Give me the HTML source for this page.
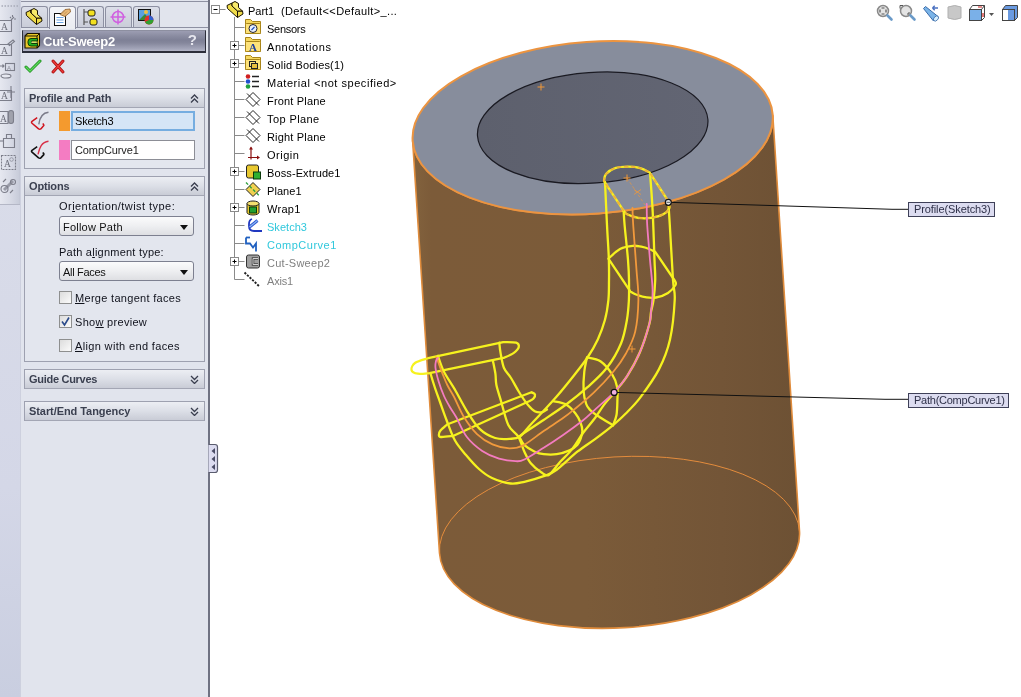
<!DOCTYPE html>
<html><head><meta charset="utf-8">
<style>
*{margin:0;padding:0;box-sizing:border-box}
html,body{width:1021px;height:697px;overflow:hidden;background:#fff;-webkit-font-smoothing:antialiased;font-family:"Liberation Sans",sans-serif;font-size:11px;color:#000}
.a{position:absolute;will-change:transform}
#strip{left:0;top:0;width:21px;height:697px;background:linear-gradient(to bottom,#dcdfea 0%,#d4d7e7 70%,#c9cee0 100%)}
#panel{left:21px;top:0;width:188px;height:697px;background:#e1e4ed}
#pborder{left:208px;top:0;width:2px;height:697px;background:#6f7282}
.tab{top:6px;width:27px;height:22px;border:1px solid #8d90a2;border-bottom:none;border-radius:3px 3px 0 0;background:linear-gradient(#dcdfe9,#c9ccd8)}
.tab.on{background:linear-gradient(#f4f5f8,#e9ebf1);height:23px}
#tabline{left:21px;top:27px;width:187px;height:1px;background:#8d90a2}
#title{left:22px;top:30px;width:184px;height:23px;border:1px solid #2c2e3a;border-top-color:#8d8fa0;border-width:1px 1px 2px 1px;background:linear-gradient(#9c9db2 0%,#8a8ca1 25%,#7e8096 45%,#85879c 60%,#a2a4b8 88%,#b2b4c6 100%)}
#title span{position:absolute;left:20px;top:3px;font-weight:bold;font-size:13px;color:#fff;letter-spacing:-0.25px}
#title b{position:absolute;right:8px;top:0px;font-size:15px;color:#e6e6ee;font-weight:bold}
.grp{left:24px;width:181px;border:1px solid #9ea1b0;background:#e3e6ee}
.gh{position:absolute;left:0;top:0;right:0;height:19px;background:linear-gradient(#eceef3 0%,#dcdfe7 50%,#c9ccd6 100%);border-bottom:1px solid #a3a6b4}
.gh span{position:absolute;left:4px;top:3px;font-weight:bold;color:#3b4050;font-size:11px}
.chev{position:absolute;right:5px;top:5px;width:9px;height:9px}
.lbl{color:#10121c;font-size:11px;white-space:nowrap}
.dd{left:59px;width:135px;height:20px;border:1px solid #7d8090;border-radius:3px;background:linear-gradient(#fbfbfc 0%,#eeeff1 50%,#dedfe3 100%)}
.dd span{position:absolute;left:3px;top:4px;color:#111}
.dd i{position:absolute;right:5px;top:8px;width:0;height:0;border-left:4px solid transparent;border-right:4px solid transparent;border-top:5px solid #111}
.cb{left:59px;width:13px;height:13px;border:1px solid #8e8f8f;background:linear-gradient(135deg,#dcdcdc,#fbfbfb)}
.tree{left:266px;white-space:nowrap;font-size:11.5px}
.tl{background:#808080}
</style></head><body>
<div class="a" id="strip"></div><div class="a" style="left:0;top:0;width:20px;height:204px;background:linear-gradient(to right,#e6e8f0,#d8dbe6 50%,#c6cad8)"></div><div class="a" style="left:20px;top:0;width:1px;height:697px;background:#cdd0de"></div><div class="a" style="left:21px;top:0;width:2px;height:697px;background:#dfe2ee"></div>
<svg class="a" style="left:0;top:0" width="22" height="210" viewBox="0 0 22 210">
 <path d="M1.5,6h1.5 M4.5,6h1.5 M7.5,6h1.5 M10.5,6h1.5 M13.5,6h1.5 M16.5,6h1.5" stroke="#a8aab8" stroke-width="1.5"/>
 <g fill="none" stroke="#7c7e8a" stroke-width="1.1">
  <path d="M-1,20.5h12.5v11h-12.5"/><path d="M11,20l3,-3 M10,17l1,1 M12.5,15v2 M14,19h2"/>
  <path d="M-1,44.5h12.5v11h-12.5"/><path d="M8,44l5,-4 l1.5,1.5 l-5,4z"/>
  <rect x="5.5" y="63.5" width="9" height="7"/><path d="M0,66h4 M2.5,64.5l1.5,1.5l-1.5,1.5"/><ellipse cx="6" cy="76" rx="5" ry="2" fill="#e6e8f0"/>
  <path d="M-1,90.5h12.5v10h-12.5"/><path d="M11,86v12 M7,92h8"/>
  <path d="M-1,111.5h9v12h-9"/><rect x="8.5" y="110.5" width="5" height="13" rx="2.5" fill="#a0a2ac"/>
  <path d="M3.5,138.5h11v9h-11z M6.5,138.5v-4h5v4"/><path d="M0,141h3"/>
  <rect x="1.5" y="155.5" width="14" height="14" stroke-dasharray="2 1"/>
  <path d="M4,190l9,-9" stroke-width="3" stroke="#9a9ca8"/><circle cx="4.5" cy="189" r="3.5"/><circle cx="13" cy="182" r="2.5"/><path d="M10,193l3,-3 M3,182l3,-3"/>
 </g>
 <g font-family="Liberation Serif" font-size="9.5" fill="#6c6e7a">
  <text x="1" y="30">A</text><text x="1" y="54">A</text><text x="1" y="99">A</text><text x="0" y="122">A</text><text x="4" y="167">A</text>
 </g>
 <text x="7" y="69.5" font-family="Liberation Sans" font-size="6" fill="#8c8e9a">A</text>
 <circle cx="11.5" cy="159.5" r="1.8" fill="none" stroke="#8c8e9a" stroke-width="0.8"/>
 <line x1="0" y1="204.5" x2="20" y2="204.5" stroke="#b4b7c6"/>
 <line x1="19.5" y1="0" x2="19.5" y2="204" stroke="#c4c8d6"/>
</svg>
<div class="a" id="panel"></div>
<div class="a" style="left:21px;top:1px;width:187px;height:1px;background:#8e91a2"></div>
<div class="a tab" style="left:21px"></div>
<div class="a tab on" style="left:49px"></div>
<div class="a tab" style="left:77px"></div>
<div class="a tab" style="left:105px"></div>
<div class="a tab" style="left:133px"></div>
<div class="a" id="tabline"></div>
<div class="a" style="left:50px;top:27px;width:25px;height:1px;background:#eceef2"></div>
<!-- tab icons -->
<svg class="a" style="left:21px;top:0" width="140" height="30" viewBox="21 0 140 30">
 <g stroke="#1a1200" stroke-width="1" stroke-linejoin="round">
  <path d="M26,12.5 L31,10 L31,13 L36.5,18 L41.5,18 L42,21 L36.5,24.5 L26.5,15.5 Z" fill="#f0dc48"/>
  <path d="M31,10 L34,8.5 L37.5,10.5 L37.5,14.5 L41.5,18 L36.5,18 L31,13 Z" fill="#f8ea6a"/>
  <path d="M36.5,18 L36.5,24.5 M31,13 L31,10" fill="none"/>
 </g>
 <rect x="54.5" y="13.5" width="11" height="12" fill="#fff" stroke="#111"/>
 <path d="M56.5,17.5h7 M56.5,20h7 M56.5,22.5h7" stroke="#5a9ae0" stroke-width="0.9"/>
 <path d="M60,14.5 L65,9.5 L70,9 L70.5,12 L65,16.5 Z" fill="#e8b878" stroke="#8a5a28" stroke-width="0.8"/><path d="M62,13.5 l3,-3 M64,14.5 l3,-3" stroke="#a87840" stroke-width="0.6"/>
 <path d="M84,9v16 M84,12h4 M84,22h4" stroke="#555" stroke-width="1.2"/>
 <rect x="88" y="10" width="7" height="6" rx="2" fill="#f2e020" stroke="#222"/>
 <rect x="90" y="19" width="7" height="6" rx="2" fill="#f2e020" stroke="#222"/>
 <circle cx="118" cy="17" r="5.5" fill="none" stroke="#d060e0" stroke-width="1.5"/>
 <path d="M118,9.5v15 M110.5,17h15" stroke="#d060e0" stroke-width="1.5"/>
 <rect x="138.5" y="9.5" width="12" height="11" fill="#5aa0e0" stroke="#111"/>
 <path d="M139,20 L145,14 L150,20Z" fill="#3a8a3a"/>
 <circle cx="149" cy="20" r="4.5" fill="#e03030"/><path d="M149,20 L149,15.5 A4.5,4.5 0 0 1 153.5,20Z" fill="#3060d0"/><path d="M149,20 L153.5,20 A4.5,4.5 0 0 1 145,22Z" fill="#30a030"/>
 <circle cx="146" cy="12" r="2" fill="#f0c040"/>
</svg>
<div class="a" id="title"><span>Cut-Sweep2</span><b>?</b></div>
<svg class="a" style="left:22px;top:32px" width="20" height="19" viewBox="22 32 20 19">
 <path d="M27.5,33.5 H39.5 V45.5 L37,48 H25 V36 Z" fill="#e8c828" stroke="#1a1400" stroke-width="1.1" stroke-linejoin="round"/>
 <path d="M25,36 L27.5,33.5 M37,36 L39.5,33.5 M37,36 V48" fill="none" stroke="#1a1400" stroke-width="1"/>
 <path d="M25,36 H37" stroke="#1a1400" stroke-width="1"/>
 <path d="M37.5,38.5 H31 Q28,38.5 28,41.5 V43 Q28,46 31,46 H37.5 V43.5 H31.5 V41 H37.5 Z" fill="#22b022" stroke="#052a05" stroke-width="0.9"/>
 <path d="M31,42.2 H37" stroke="#c8f0a0" stroke-width="0.9"/>
</svg>
<!-- ok / cancel -->
<svg class="a" style="left:24px;top:58px" width="45" height="17" viewBox="24 58 45 17">
 <path d="M26,67 L30,71 L40,61" fill="none" stroke="#1f8f1f" stroke-width="3.0" stroke-linecap="round"/>
 <path d="M26,67 L30,71 L40,61" fill="none" stroke="#5ad85a" stroke-width="1.3" stroke-linecap="round"/>
 <path d="M53,61 L63,72 M63,61 L53,72" stroke="#a80e0e" stroke-width="3.0" stroke-linecap="round"/>
 <path d="M53,61 L63,72 M63,61 L53,72" stroke="#ee3a3a" stroke-width="1.3" stroke-linecap="round"/>
</svg>
<!-- Profile and Path -->
<div class="a grp" style="top:88px;height:81px">
 <div class="gh"><span style="letter-spacing:-0.09px">Profile and Path</span>
 <svg class="chev" viewBox="0 0 9 9"><path d="M1,4.5 L4.5,1 L8,4.5 M1,8.5 L4.5,5 L8,8.5" fill="none" stroke="#3a3e4e" stroke-width="1.3"/></svg></div>
</div>
<svg class="a" style="left:29px;top:108px" width="22" height="54" viewBox="29 108 22 54">
 <path d="M37.2,117.7 L32,121.3 Q31,122.3 32,123.2 L38.6,128.9 Q39.8,129.6 40.8,128.9 L43.8,125.6 Q44.2,124.9 43.4,124.2 L42.6,123.6" fill="none" stroke="#d0141e" stroke-width="1.5" stroke-linejoin="round"/>
 <path d="M38.8,124.3 C39.5,119 41.5,113 48.5,112.3" fill="none" stroke="#7a7a88" stroke-width="1.4"/>
 <path d="M37.2,146.7 L32,150.3 Q31,151.3 32,152.2 L38.6,157.9 Q39.8,158.6 40.8,157.9 L43.8,154.6 Q44.2,153.9 43.4,153.2 L42.6,152.6" fill="none" stroke="#111" stroke-width="1.6" stroke-linejoin="round"/>
 <path d="M38,154.3 C39.5,148 41.5,142 48.5,141.3" fill="none" stroke="#d83048" stroke-width="1.4"/>
</svg>
<div class="a" style="left:59px;top:111px;width:11px;height:20px;background:#f49a2e"></div>
<div class="a" style="left:71px;top:111px;width:124px;height:20px;border:2px solid #76ade0;background:#d5e5f6"><span class="a" style="left:2px;top:2px;font-size:11px;color:#000;letter-spacing:-0.19px">Sketch3</span></div>
<div class="a" style="left:59px;top:140px;width:11px;height:20px;background:#f47cc2"></div>
<div class="a" style="left:71px;top:140px;width:124px;height:20px;border:1px solid #8c8e96;background:#fff"><span class="a" style="left:3px;top:3px;font-size:11px;color:#222;letter-spacing:-0.11px">CompCurve1</span></div>
<!-- Options -->
<div class="a grp" style="top:176px;height:186px">
 <div class="gh"><span style="letter-spacing:-0.16px">Options</span>
 <svg class="chev" viewBox="0 0 9 9"><path d="M1,4.5 L4.5,1 L8,4.5 M1,8.5 L4.5,5 L8,8.5" fill="none" stroke="#3a3e4e" stroke-width="1.3"/></svg></div>
</div>
<div class="a lbl" style="left:59px;top:200px;letter-spacing:0.45px">Or<u>i</u>entation/twist type:</div>
<div class="a dd" style="top:216px"><span style="letter-spacing:0.21px">Follow Path</span><i></i></div>
<div class="a lbl" style="left:59px;top:246px;letter-spacing:0.23px">Path a<u>l</u>ignment type:</div>
<div class="a dd" style="top:261px"><span style="letter-spacing:-0.3px">All Faces</span><i></i></div>
<div class="a cb" style="top:291px"></div>
<div class="a lbl" style="left:75px;top:292px;letter-spacing:0.3px"><u>M</u>erge tangent faces</div>
<div class="a cb" style="top:315px"><svg width="11" height="11" style="position:absolute;left:0;top:0"><path d="M2,5.5 L4.5,9 L9,1.5" fill="none" stroke="#2a4a8a" stroke-width="1.6"/></svg></div>
<div class="a lbl" style="left:75px;top:316px;letter-spacing:0.3px">Sho<u>w</u> preview</div>
<div class="a cb" style="top:339px"></div>
<div class="a lbl" style="left:75px;top:340px;letter-spacing:0.35px"><u>A</u>lign with end faces</div>
<div class="a grp" style="top:369px;height:20px">
 <div class="gh"><span style="letter-spacing:-0.29px">Guide Curves</span>
 <svg class="chev" viewBox="0 0 9 9"><path d="M1,1 L4.5,4.5 L8,1 M1,5 L4.5,8.5 L8,5" fill="none" stroke="#3a3e4e" stroke-width="1.3"/></svg></div>
</div>
<div class="a grp" style="top:401px;height:20px">
 <div class="gh"><span style="letter-spacing:-0.07px">Start/End Tangency</span>
 <svg class="chev" viewBox="0 0 9 9"><path d="M1,1 L4.5,4.5 L8,1 M1,5 L4.5,8.5 L8,5" fill="none" stroke="#3a3e4e" stroke-width="1.3"/></svg></div>
</div>
<div class="a" id="pborder"></div>
<svg class="a" style="left:208px;top:443px" width="11" height="31" viewBox="208 443 11 31">
 <path d="M208.5,444.5 H215 Q217.5,444.5 217.5,447 V470 Q217.5,472.5 215,472.5 H208.5" fill="#dcdcf0" stroke="#5a5c6e" stroke-width="1.2"/>
 <path d="M215,448 L211.5,451 L215,454Z M215,456 L211.5,459 L215,462Z M215,464 L211.5,467 L215,470Z" fill="#4a4c66"/>
</svg>
<!-- graphics -->
<svg class="a" style="left:0;top:0" width="1021" height="697" viewBox="0 0 1021 697">
<defs><linearGradient id="side" x1="412" y1="0" x2="799" y2="0" gradientUnits="userSpaceOnUse"><stop offset="0" stop-color="#83633e"/><stop offset="0.05" stop-color="#7c5b39"/><stop offset="0.45" stop-color="#7b5b39"/><stop offset="0.8" stop-color="#735537"/><stop offset="1" stop-color="#6d5134"/></linearGradient><linearGradient id="hole" x1="0" y1="0" x2="1" y2="0"><stop offset="0" stop-color="#5d606d"/><stop offset="1" stop-color="#626573"/></linearGradient></defs>
<path d="M412.6,140.4 L439.5,553.2 A180.3,85.5 -3.40 0 0 799.5,531.4 L772.8,115.2 A180.5,86.0 -4.10 0 1 412.6,140.4 Z" fill="url(#side)" stroke="#e08c3c" stroke-width="1.6"/>
<path d="M439.5,553.2 A180.3,85.5 -3.40 0 1 799.5,531.4" fill="none" stroke="#e48c3c" stroke-width="1"/>
<ellipse cx="592.7" cy="127.8" rx="180.5" ry="86.0" transform="rotate(-4.10 592.7 127.8)" fill="#878d9c" stroke="#ec9440" stroke-width="2"/>
<ellipse cx="592.7" cy="127.8" rx="115.5" ry="55.3" transform="rotate(-4.10 592.7 127.8)" fill="url(#hole)" stroke="#1a1a22" stroke-width="1.2"/>
<path d="M605.0,182.0 C605.3,189.2 606.4,212.3 607.0,225.0 C607.6,237.7 608.5,248.8 608.8,258.0 C609.1,267.2 609.1,273.0 609.0,280.0 C608.9,287.0 609.1,293.3 608.4,300.0 C607.7,306.7 606.7,313.4 604.9,320.0 C603.1,326.6 600.7,333.1 597.8,339.4 C594.9,345.6 591.4,351.6 587.5,357.5 C583.6,363.4 579.5,368.4 574.3,375.0 C569.1,381.6 561.4,391.1 556.2,397.1 C551.0,403.1 547.6,406.5 543.2,411.2 C538.9,415.9 534.0,421.0 530.1,425.2 C526.2,429.4 523.4,434.2 520.0,436.5 C516.6,438.8 514.1,438.6 510.0,438.8 C505.9,439.1 500.2,439.6 495.1,438.0 C490.0,436.4 484.3,433.4 479.6,428.9 C474.9,424.4 470.7,417.2 466.7,410.8 C462.7,404.4 459.2,397.1 455.4,390.5 C451.6,383.9 446.6,377.0 443.7,371.2 C440.8,365.4 438.9,358.3 437.9,355.7" fill="none" stroke="#f6f21e" stroke-width="2.30" stroke-linecap="round" stroke-linejoin="round" />
<path d="M499.3,342.7 C499.5,344.4 499.8,348.9 500.6,353.1 C501.4,357.3 502.3,363.9 504.0,368.0 C505.7,372.1 508.5,374.0 511.0,378.0 C513.5,382.0 516.2,387.5 519.0,392.0 C521.8,396.5 525.3,401.8 528.0,405.0 C530.7,408.2 532.8,410.3 535.2,411.5 C537.6,412.7 540.2,412.5 542.2,412.2 C544.2,411.9 546.2,409.9 547.0,409.5" fill="none" stroke="#f6f21e" stroke-width="2.30" stroke-linecap="round" stroke-linejoin="round" />
<path d="M623.6,210.7 C623.8,213.1 623.9,216.8 624.6,225.0 C625.3,233.2 627.3,250.8 628.0,260.0 C628.7,269.2 628.9,273.3 629.0,280.0 C629.1,286.7 629.2,293.3 628.9,300.0 C628.5,306.7 628.2,312.8 626.9,320.0 C625.6,327.2 624.4,335.2 621.1,343.2 C617.8,351.2 612.5,360.5 606.9,367.8 C601.3,375.1 594.2,381.2 587.5,387.2 C580.8,393.2 574.2,398.5 566.8,404.0 C559.4,409.5 550.2,415.5 543.2,420.2 C536.2,424.9 529.1,429.6 525.1,432.3 C521.1,435.0 520.0,435.8 519.0,436.5" fill="none" stroke="#f6f21e" stroke-width="2.30" stroke-linecap="round" stroke-linejoin="round" />
<path d="M650.2,175.0 C650.6,181.2 652.0,197.8 652.7,212.0 C653.4,226.2 654.1,248.7 654.5,260.0 C654.9,271.3 655.4,273.3 655.2,280.0 C655.0,286.7 654.2,294.7 653.5,300.0 C652.8,305.3 651.7,308.1 651.0,312.0 C650.3,315.9 651.2,317.0 649.4,323.7 C647.6,330.4 643.7,343.3 640.0,352.0 C636.3,360.7 631.6,369.1 627.3,375.8 C623.0,382.6 618.2,387.7 614.4,392.5 C610.6,397.3 607.5,400.1 604.3,404.4 C601.1,408.6 598.5,413.2 595.0,418.0 C591.5,422.8 586.8,427.8 583.0,433.0 C579.2,438.2 576.0,444.3 572.2,449.1 C568.4,453.9 563.9,457.7 560.0,462.0 C556.1,466.3 552.0,473.2 548.9,474.9 C545.8,476.6 544.2,474.2 541.2,472.3 C538.2,470.4 533.6,466.7 530.8,463.3 C528.0,459.9 526.5,456.1 524.4,451.7 C522.3,447.3 521.0,441.1 518.3,436.7 C515.6,432.2 511.2,431.2 508.3,425.0 C505.4,418.8 502.6,406.3 500.6,399.6 C498.6,392.9 497.3,389.3 496.4,385.0 C495.5,380.7 496.0,377.8 495.4,373.7 C494.8,369.6 493.2,362.4 492.8,360.2" fill="none" stroke="#f6f21e" stroke-width="2.30" stroke-linecap="round" stroke-linejoin="round" />
<path d="M668.3,201.2 C668.5,205.2 669.0,211.9 669.8,225.0 C670.6,238.1 672.2,267.5 673.0,280.0 C673.8,292.5 675.2,290.1 674.7,300.0 C674.2,309.9 672.6,327.9 670.0,339.5 C667.4,351.1 663.9,359.7 658.9,369.4 C653.9,379.1 645.6,390.4 640.0,397.9 C634.4,405.4 629.6,409.5 625.0,414.2 C620.4,418.9 617.1,421.7 612.2,425.8 C607.3,429.9 601.2,434.5 595.4,438.8 C589.6,443.1 583.8,446.6 577.3,451.7 C570.8,456.8 562.3,465.6 556.7,469.7 C551.1,473.8 549.1,474.2 543.7,476.2 C538.3,478.2 529.9,480.6 524.4,481.8 C518.9,483.0 516.0,484.1 510.6,483.5 C505.2,482.9 497.3,480.4 492.0,478.0 C486.7,475.6 483.3,472.8 479.0,469.0 C474.7,465.2 470.0,459.8 466.0,455.0 C462.0,450.2 458.2,446.3 455.0,440.5 C451.8,434.7 449.0,426.4 446.5,420.0 C444.0,413.6 441.9,407.3 440.0,402.0 C438.1,396.7 436.6,392.8 435.0,388.0 C433.4,383.2 431.2,375.9 430.5,373.5" fill="none" stroke="#f6f21e" stroke-width="2.30" stroke-linecap="round" stroke-linejoin="round" />
<path d="M608.4,258.7 C610.3,257.1 615.9,251.2 620.0,249.0 C624.1,246.8 628.7,246.1 632.9,245.8 C637.1,245.6 641.3,246.5 645.0,247.5 C648.7,248.5 653.5,251.1 655.2,251.8 L675.0,281.0 C675.1,281.7 676.7,283.0 675.5,285.0 C674.3,287.0 671.2,290.9 668.0,293.0 C664.8,295.1 659.6,296.8 656.0,297.5 C652.4,298.2 649.9,297.9 646.6,297.4 C643.3,296.9 638.7,295.5 636.0,294.5 C633.3,293.5 631.2,291.9 630.3,291.4 L608.4,258.7Z" fill="none" stroke="#f6f21e" stroke-width="2.30" stroke-linecap="round" stroke-linejoin="round" />
<path d="M587.0,357.5 C586.5,359.9 584.9,366.1 584.3,371.7 C583.7,377.3 583.3,385.6 583.6,391.0 C583.9,396.4 585.1,400.8 586.2,404.0 C587.3,407.2 588.1,407.9 590.1,410.0 C592.1,412.1 594.7,413.8 598.5,416.3 C602.3,418.9 610.6,423.8 613.0,425.3" fill="none" stroke="#f6f21e" stroke-width="2.30" stroke-linecap="round" stroke-linejoin="round" />
<path d="M587.0,357.5 C589.2,358.1 596.2,358.5 600.4,361.3 C604.6,364.1 609.2,369.9 612.0,374.2 C614.8,378.5 616.3,382.9 617.2,387.2 C618.1,391.5 617.5,395.4 617.4,400.0 C617.3,404.6 617.2,410.8 616.5,415.0 C615.8,419.2 613.6,423.6 613.0,425.3" fill="none" stroke="#f6f21e" stroke-width="2.30" stroke-linecap="round" stroke-linejoin="round" />
<path d="M428.2,358.2 L503.2,342.1 C505.4,342.2 513.5,341.8 516.1,342.7 C518.7,343.6 519.1,345.6 518.7,347.3 C518.3,349.0 515.9,351.4 513.5,353.1 C511.1,354.8 506.0,356.9 504.5,357.6 L429.5,373.1 C427.6,373.2 420.9,374.2 417.9,373.7 C414.9,373.2 411.9,371.7 411.5,369.9 C411.1,368.1 412.5,364.8 415.3,362.8 C418.1,360.9 426.1,359.0 428.2,358.2Z" fill="none" stroke="#f6f21e" stroke-width="2.30" stroke-linecap="round" stroke-linejoin="round" />
<path d="M447.0,424.5 L531.5,392.2 C532.1,392.6 534.7,393.4 535.0,394.5 C535.3,395.6 534.6,397.3 533.5,398.5 C532.4,399.7 529.3,401.0 528.5,401.5 L453.0,436.0 C451.0,436.2 443.4,437.2 441.0,437.0 C438.6,436.8 439.0,435.8 438.9,434.7 C438.8,433.6 439.1,432.2 440.5,430.5 C441.9,428.8 445.9,425.5 447.0,424.5Z" fill="none" stroke="#f6f21e" stroke-width="2.30" stroke-linecap="round" stroke-linejoin="round" />
<path d="M553.2,401.1 C555.2,401.6 561.6,402.1 565.3,404.1 C569.0,406.1 572.8,410.2 575.3,413.2 C577.8,416.2 579.2,419.2 580.4,422.2 C581.6,425.2 582.4,428.3 582.4,431.2 C582.4,434.1 581.2,437.0 580.4,439.3 C579.5,441.6 579.1,443.1 577.3,445.0 C575.5,446.9 573.0,448.9 569.6,450.4 C566.2,451.9 561.0,453.6 556.7,454.2 C552.4,454.8 547.4,454.6 543.7,454.2 C540.0,453.8 537.9,453.2 534.7,451.7 C531.5,450.2 526.9,447.5 524.4,445.2 C521.9,442.9 520.7,439.2 520.0,438.0" fill="none" stroke="#f6f21e" stroke-width="2.30" stroke-linecap="round" stroke-linejoin="round" />
<path d="M604.0,181.1 C604.3,179.9 604.1,176.3 606.0,174.1 C607.9,171.9 611.4,169.3 615.1,168.1 C618.8,166.8 623.9,166.6 628.1,166.6 C632.3,166.6 636.6,167.1 640.2,168.1 C643.8,169.1 648.1,171.8 649.7,172.6 L668.3,201.2 C668.5,202.4 670.1,206.0 669.3,208.2 C668.5,210.4 666.3,212.7 663.3,214.3 C660.3,215.9 655.4,217.2 651.2,217.8 C647.0,218.4 642.2,218.4 638.2,217.8 C634.2,217.2 629.5,215.5 627.1,214.3 C624.7,213.1 624.2,211.3 623.6,210.7 L604.0,181.1Z" fill="none" stroke="#f6f21e" stroke-width="2.30" stroke-linecap="round" stroke-linejoin="round" />
<path d="M604.0,181.1 C604.3,179.9 604.1,176.3 606.0,174.1 C607.9,171.9 611.4,169.3 615.1,168.1 C618.8,166.8 623.9,166.6 628.1,166.6 C632.3,166.6 636.6,167.1 640.2,168.1 C643.8,169.1 648.1,171.8 649.7,172.6 L668.3,201.2 C668.5,202.4 670.1,206.0 669.3,208.2 C668.5,210.4 666.3,212.7 663.3,214.3 C660.3,215.9 655.4,217.2 651.2,217.8 C647.0,218.4 642.2,218.4 638.2,217.8 C634.2,217.2 629.5,215.5 627.1,214.3 C624.7,213.1 624.2,211.3 623.6,210.7 L604.0,181.1Z" fill="none" stroke="#eea040" stroke-width="1.80" stroke-linecap="round" stroke-linejoin="round" stroke-dasharray="3 4" stroke-opacity="0.8"/>
<path d="M632.5,208.0 C632.6,210.8 632.5,214.7 633.2,225.0 C633.9,235.3 635.6,257.5 636.5,270.0 C637.4,282.5 638.6,289.7 638.4,300.0 C638.2,310.3 637.3,322.7 635.2,331.6 C633.1,340.6 629.4,347.0 625.8,353.7 C622.1,360.4 618.6,365.3 613.3,371.7 C608.0,378.1 600.5,386.1 594.0,392.3 C587.5,398.5 579.8,404.8 574.6,409.1 C569.5,413.4 568.2,414.5 563.1,418.1 C558.0,421.8 550.3,426.5 543.7,431.0 C537.1,435.5 529.2,442.3 523.5,445.2 C517.8,448.1 514.5,448.4 509.3,448.3 C504.1,448.2 497.9,446.8 492.5,444.4 C487.1,442.0 481.7,438.6 477.0,434.1 C472.3,429.6 467.9,423.5 464.1,417.3 C460.3,411.1 456.9,402.4 454.1,397.0 C451.3,391.6 449.2,388.9 447.3,385.0 C445.4,381.1 444.2,377.9 442.5,373.7 C440.8,369.4 438.4,362.2 437.3,359.5 C436.2,356.8 436.2,357.8 436.0,357.5" fill="none" stroke="#f29a3c" stroke-width="1.80" stroke-linecap="round" stroke-linejoin="round" />
<path d="M646.7,204.0 C646.8,207.5 646.7,215.7 647.2,225.0 C647.8,234.3 649.1,249.2 650.0,260.0 C650.9,270.8 652.4,281.3 652.6,290.0 C652.8,298.7 651.5,306.4 651.0,312.0 C650.5,317.6 651.2,317.0 649.4,323.7 C647.6,330.4 643.7,343.3 640.0,352.0 C636.3,360.7 631.6,369.1 627.3,375.8 C623.0,382.5 619.2,386.8 614.0,392.3 C608.8,397.8 601.0,404.2 595.8,408.9 C590.5,413.6 588.0,416.4 582.5,420.7 C577.0,425.0 569.6,430.4 563.1,434.9 C556.6,439.4 550.2,443.7 543.7,447.8 C537.2,451.9 529.1,457.3 524.4,459.5 C519.7,461.7 519.9,461.3 515.7,461.2 C511.5,461.1 504.6,460.3 499.0,458.6 C493.4,456.9 487.6,454.5 482.2,450.9 C476.8,447.2 471.0,442.3 466.7,436.7 C462.4,431.1 459.0,422.1 456.3,417.3 C453.6,412.5 452.6,411.6 450.5,408.0 C448.4,404.4 446.0,400.5 444.0,396.0 C442.0,391.5 439.9,385.7 438.5,381.0 C437.1,376.3 435.9,371.3 435.5,368.0 C435.1,364.7 435.6,362.7 436.0,361.0 C436.4,359.3 437.7,358.5 438.0,358.0" fill="none" stroke="#f47cc0" stroke-width="1.80" stroke-linecap="round" stroke-linejoin="round" />
<polyline points="668.3,202.3 892,209.3 908.5,209.3" fill="none" stroke="#111" stroke-width="1"/>
<polyline points="614.2,392.4 885,399.3 908.5,399.3" fill="none" stroke="#111" stroke-width="1"/>
<circle cx="668.3" cy="202.3" r="3" fill="#e8e8e8" stroke="#111" stroke-width="1.2"/>
<line x1="666.5" y1="202.3" x2="670" y2="202.3" stroke="#333" stroke-width="0.8"/>
<circle cx="614.2" cy="392.4" r="3" fill="#f0b0e0" stroke="#111" stroke-width="1.2"/>
<path d="M537.5,87.0 h7 M541.0,83.5 v7" stroke="#f09838" stroke-width="1"/>
<path d="M628.5,349.0 h7 M632.0,345.5 v7" stroke="#f09838" stroke-width="1"/>
<path d="M623.5,178.0 h7 M627.0,174.5 v7" stroke="#f09838" stroke-width="1"/>
<path d="M627,178 L645,205" stroke="#f09838" stroke-width="0.9" stroke-dasharray="3 2" stroke-opacity="0.7"/>
<path d="M634,189.5 l7,5 M641,189.5 l-7,5" stroke="#f09838" stroke-width="1" stroke-opacity="0.75"/>
</svg>
<!-- annotation boxes -->
<div class="a" style="left:908px;top:202px;width:87px;height:15px;border:1px solid #3e4058;background:#dcdcf0"><span class="a" style="left:5px;top:0px;font-size:11px;color:#2e3048;letter-spacing:-0.1px">Profile(Sketch3)</span></div>
<div class="a" style="left:908px;top:393px;width:101px;height:15px;border:1px solid #3e4058;background:#dcdcf0"><span class="a" style="left:5px;top:0px;font-size:11px;color:#2e3048;letter-spacing:-0.25px">Path(CompCurve1)</span></div>
<!-- feature tree -->
<svg class="a" style="left:205px;top:0" width="160" height="290" viewBox="205 0 160 290">
<rect x="211.5" y="5.5" width="8" height="8" fill="#fff" stroke="#8a8a8a"/><path d="M213.5,9.5h4" stroke="#000"/>
<path d="M219.5,9.5h6" stroke="#8a8a8a"/>
<path d="M234.5,17v262.5" stroke="#8a8a8a"/>
<g transform="translate(201,-7)" stroke="#1a1200" stroke-width="1" stroke-linejoin="round"><path d="M26,12.5 L31,10 L31,13 L36.5,18 L41.5,18 L42,21 L36.5,24.5 L26.5,15.5 Z" fill="#f0dc48"/><path d="M31,10 L34,8.5 L37.5,10.5 L37.5,14.5 L41.5,18 L36.5,18 L31,13 Z" fill="#f8ea6a"/><path d="M36.5,18 L36.5,24.5" fill="none"/></g>
<path d="M234.5,27.5h10" stroke="#8a8a8a"/>
<path d="M245.5,19.5 h5 l2,2 h8 v12 h-15 z" fill="#f6d860" stroke="#a88418" stroke-width="1"/>
<rect x="245.5" y="23.5" width="15" height="10" rx="1" fill="#fde27a" stroke="#a88418"/>
<circle cx="253.0" cy="28.5" r="4" fill="#e8f0ff" stroke="#223"/><path d="M251.5,30.0 l3,-3" stroke="#2050c0" stroke-width="1.2"/>
<path d="M234.5,45.5h10" stroke="#8a8a8a"/>
<rect x="230.5" y="41.5" width="8" height="8" fill="#fff" stroke="#8a8a8a"/><path d="M232.5,45.5h4 M234.5,43.5v4" stroke="#000"/>
<path d="M245.5,37.5 h5 l2,2 h8 v12 h-15 z" fill="#f6d860" stroke="#a88418" stroke-width="1"/>
<rect x="245.5" y="41.5" width="15" height="10" rx="1" fill="#fde27a" stroke="#a88418"/>
<text x="249.0" y="50.5" font-family="Liberation Serif" font-weight="bold" font-size="11" fill="#2040a0">A</text>
<path d="M234.5,63.5h10" stroke="#8a8a8a"/>
<rect x="230.5" y="59.5" width="8" height="8" fill="#fff" stroke="#8a8a8a"/><path d="M232.5,63.5h4 M234.5,61.5v4" stroke="#000"/>
<path d="M245.5,55.5 h5 l2,2 h8 v12 h-15 z" fill="#f6d860" stroke="#a88418" stroke-width="1"/>
<rect x="245.5" y="59.5" width="15" height="10" rx="1" fill="#fde27a" stroke="#a88418"/>
<rect x="249.5" y="61.5" width="6" height="5" fill="none" stroke="#222"/><rect x="251.5" y="63.5" width="6" height="5" fill="#e8c040" stroke="#222"/>
<path d="M234.5,81.5h10" stroke="#8a8a8a"/>
<circle cx="248.0" cy="76.5" r="2.3" fill="#d02020"/><circle cx="248.0" cy="81.5" r="2.3" fill="#2050d0"/><circle cx="248.0" cy="86.5" r="2.3" fill="#20a040"/>
<path d="M252.0,76.5h7 M252.0,81.5h7 M252.0,86.5h7" stroke="#222" stroke-width="1.6"/>
<path d="M234.5,99.5h10" stroke="#8a8a8a"/>
<path d="M246.0,99.5 l7,-7 l7,7 l-7,7 z" fill="none" stroke="#222" stroke-width="1"/><path d="M247.0,93.5 l12,12" stroke="#222" stroke-width="1"/>
<path d="M234.5,117.5h10" stroke="#8a8a8a"/>
<path d="M246.0,117.5 l7,-7 l7,7 l-7,7 z" fill="none" stroke="#222" stroke-width="1"/><path d="M247.0,111.5 l12,12" stroke="#222" stroke-width="1"/>
<path d="M234.5,135.5h10" stroke="#8a8a8a"/>
<path d="M246.0,135.5 l7,-7 l7,7 l-7,7 z" fill="none" stroke="#222" stroke-width="1"/><path d="M247.0,129.5 l12,12" stroke="#222" stroke-width="1"/>
<path d="M234.5,153.5h10" stroke="#8a8a8a"/>
<path d="M251.0,159.5 v-12 M248.0,157.5 h11" stroke="#8a1010" stroke-width="1.2"/><path d="M251.0,146.5 l-2,3 h4z M260.0,157.5 l-3,-2 v4z" fill="#8a1010"/>
<path d="M234.5,171.5h10" stroke="#8a8a8a"/>
<rect x="230.5" y="167.5" width="8" height="8" fill="#fff" stroke="#8a8a8a"/><path d="M232.5,171.5h4 M234.5,169.5v4" stroke="#000"/>
<rect x="246.5" y="165.0" width="12" height="13" rx="2" fill="#e8c830" stroke="#222"/><rect x="253.5" y="172.0" width="7" height="7" fill="#30b030" stroke="#0a3a0a"/>
<path d="M234.5,189.5h10" stroke="#8a8a8a"/>
<path d="M246.0,189.5 l7,-7 l7,7 l-7,7 z" fill="#f0d050" stroke="#222" stroke-width="1"/><path d="M246.0,182.5 l13,13" stroke="#30a040" stroke-width="1.4" stroke-dasharray="3 2"/>
<path d="M234.5,207.5h10" stroke="#8a8a8a"/>
<rect x="230.5" y="203.5" width="8" height="8" fill="#fff" stroke="#8a8a8a"/><path d="M232.5,207.5h4 M234.5,205.5v4" stroke="#000"/>
<path d="M247.0,203.5 v9 a6,2.5 0 0 0 12,0 v-9" fill="#e8c830" stroke="#222"/><ellipse cx="253.0" cy="203.5" rx="6" ry="2.5" fill="#f4e070" stroke="#222"/><rect x="249.5" y="207.0" width="7" height="6" fill="#20a030" stroke="#0a3a0a"/>
<path d="M234.5,225.5h10" stroke="#8a8a8a"/>
<path d="M252.0,219.0 q-3,1 -3,5 v2 q0,5 5,5 h8" fill="none" stroke="#2038c0" stroke-width="1.8"/><path d="M249.5,227.0 l8,-6.5" stroke="#2a50d0" stroke-width="3"/><path d="M249.5,227.0 l8,-6.5" stroke="#8ab8f0" stroke-width="1.2"/>
<path d="M234.5,243.5h10" stroke="#8a8a8a"/>
<path d="M246.0,237.5 v6 h4 l3,4 l3,-4 v8" fill="none" stroke="#2060c0" stroke-width="1.8"/><path d="M246.0,237.5 h4" stroke="#2060c0" stroke-width="1.8"/>
<path d="M234.5,261.5h10" stroke="#8a8a8a"/>
<rect x="230.5" y="257.5" width="8" height="8" fill="#fff" stroke="#8a8a8a"/><path d="M232.5,261.5h4 M234.5,259.5v4" stroke="#000"/>
<rect x="246.5" y="255.0" width="13" height="13" rx="2" fill="#a0a0a0" stroke="#333"/><path d="M258.0,258.5 h-5 v6 h5" fill="none" stroke="#444" stroke-width="2.5"/><path d="M258.0,258.5 h-5 v6 h5" fill="none" stroke="#d0d0d0" stroke-width="1"/>
<path d="M234.5,279.5h10" stroke="#8a8a8a"/>
<path d="M244.5,272.5 l15,14" stroke="#222" stroke-width="1.9" stroke-dasharray="2.2 1.3"/>
</svg>
<div class="a" style="left:247.5px;top:5.3px;font-size:11px;font-weight:normal;color:#000;letter-spacing:-0.02px;white-space:nowrap;line-height:13px;">Part1</div>
<div class="a" style="left:280.8px;top:5.3px;font-size:11px;font-weight:normal;color:#000;letter-spacing:0.38px;white-space:nowrap;line-height:13px;">(Default&lt;&lt;Default&gt;_...</div>
<div class="a" style="left:266.5px;top:23.1px;font-size:11px;font-weight:normal;color:#000;letter-spacing:-0.28px;white-space:nowrap;line-height:13px;">Sensors</div>
<div class="a" style="left:266.5px;top:41.1px;font-size:11px;font-weight:normal;color:#000;letter-spacing:0.58px;white-space:nowrap;line-height:13px;">Annotations</div>
<div class="a" style="left:266.5px;top:59.1px;font-size:11px;font-weight:normal;color:#000;letter-spacing:0.16px;white-space:nowrap;line-height:13px;">Solid Bodies(1)</div>
<div class="a" style="left:266.5px;top:77.1px;font-size:11px;font-weight:normal;color:#000;letter-spacing:0.54px;white-space:nowrap;line-height:13px;">Material &lt;not specified&gt;</div>
<div class="a" style="left:266.5px;top:95.1px;font-size:11px;font-weight:normal;color:#000;letter-spacing:0.18px;white-space:nowrap;line-height:13px;">Front Plane</div>
<div class="a" style="left:266.5px;top:113.1px;font-size:11px;font-weight:normal;color:#000;letter-spacing:0.40px;white-space:nowrap;line-height:13px;">Top Plane</div>
<div class="a" style="left:266.5px;top:131.1px;font-size:11px;font-weight:normal;color:#000;letter-spacing:0.18px;white-space:nowrap;line-height:13px;">Right Plane</div>
<div class="a" style="left:266.5px;top:149.1px;font-size:11px;font-weight:normal;color:#000;letter-spacing:0.51px;white-space:nowrap;line-height:13px;">Origin</div>
<div class="a" style="left:266.5px;top:167.1px;font-size:11px;font-weight:normal;color:#000;letter-spacing:0.11px;white-space:nowrap;line-height:13px;">Boss-Extrude1</div>
<div class="a" style="left:266.5px;top:185.1px;font-size:11px;font-weight:normal;color:#000;letter-spacing:0.05px;white-space:nowrap;line-height:13px;">Plane1</div>
<div class="a" style="left:266.5px;top:203.1px;font-size:11px;font-weight:normal;color:#000;letter-spacing:0.28px;white-space:nowrap;line-height:13px;">Wrap1</div>
<div class="a" style="left:266.5px;top:221.1px;font-size:11px;font-weight:normal;color:#30c8dc;letter-spacing:0.03px;white-space:nowrap;line-height:13px;">Sketch3</div>
<div class="a" style="left:266.5px;top:239.1px;font-size:11px;font-weight:normal;color:#30c8dc;letter-spacing:0.50px;white-space:nowrap;line-height:13px;">CompCurve1</div>
<div class="a" style="left:266.5px;top:257.1px;font-size:11px;font-weight:normal;color:#808080;letter-spacing:0.26px;white-space:nowrap;line-height:13px;">Cut-Sweep2</div>
<div class="a" style="left:266.5px;top:275.1px;font-size:11px;font-weight:normal;color:#808080;letter-spacing:-0.17px;white-space:nowrap;line-height:13px;">Axis1</div>
<!-- toolbar -->
<svg class="a" style="left:870px;top:0" width="151" height="26" viewBox="870 0 151 26">
<circle cx="883.0" cy="11.0" r="5.5" fill="#e4e4e4" stroke="#8a8a8a" stroke-width="1.5"/><path d="M887.5,15.5 l4,4" stroke="#6a9ac8" stroke-width="2.6" stroke-linecap="round"/>
<path d="M880,9.5 v3 M886,9.5 v3 M881.5,8 h3 M881.5,14 h3" stroke="#555" stroke-width="1.2"/>
<circle cx="906.0" cy="11.0" r="5.5" fill="#e4e4e4" stroke="#8a8a8a" stroke-width="1.5"/><path d="M910.5,15.5 l4,4" stroke="#6a9ac8" stroke-width="2.6" stroke-linecap="round"/>
<path d="M900,5.5 h3 M900,5.5 v3 M907,14 h2 v-2" stroke="#555" stroke-width="1" fill="none"/>
<path d="M923.5,8.5 L925.5,6.5 L938,16.5 L933.5,21 Z" fill="#7ab4e8" stroke="#3a6aa8" stroke-width="1" stroke-linejoin="round"/><ellipse cx="936" cy="18.5" rx="3" ry="2" transform="rotate(-45 936 18.5)" fill="#d8f0ff" stroke="#3a6aa8" stroke-width="0.8"/><path d="M932.5,8 h5.5 M932.5,8 l2.2,-2.2 M932.5,8 l2.2,2.2" stroke="#4a70c0" stroke-width="1.4"/>
<path d="M948,7 q7,-3 13,0 v11 q-6,3 -13,0 z" fill="#c8c8c8" stroke="#b0b0b0"/>
<path d="M969.5,9.5 l3,-4 h12 v12 l-3,3 h-12z" fill="#fff" stroke="#444"/><rect x="969.5" y="9.5" width="12" height="11" fill="#7ab0e8" stroke="#444"/><path d="M981.5,9.5 l3,-4" stroke="#444"/><path d="M978,7h4 M983,13v4" stroke="#d02020" stroke-width="1.2"/>
<path d="M989,13 h5 l-2.5,3z" fill="#555"/>
<path d="M1002.5,9.5 l3,-4 h12 v12 l-3,3 h-12z" fill="#6a9ae0" stroke="#444"/><rect x="1002.5" y="9.5" width="12" height="11" fill="#fff" stroke="#444"/><rect x="1008" y="10" width="6" height="10" fill="#6a9ae0"/>
</svg>
</body></html>
